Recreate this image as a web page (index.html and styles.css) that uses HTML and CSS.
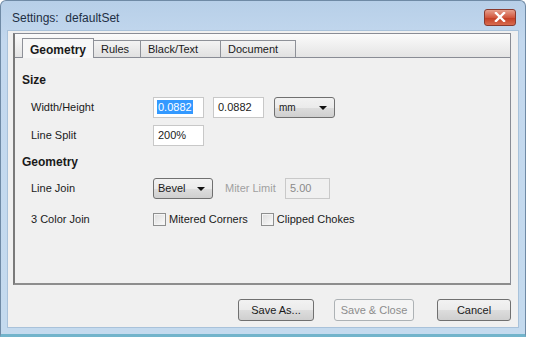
FILE: index.html
```html
<!DOCTYPE html>
<html lang="en">
<head>
    <meta charset="UTF-8">
    <title>Settings: defaultSet</title>
    <link rel="stylesheet" href="styles.css">
</head>
<body>
    <div class="window">
        <div class="titlebar">
            <span class="title">Settings:&nbsp; defaultSet</span>
            <div class="close">
                <svg width="12" height="10" viewBox="0 0 12 10">
                    <path d="M2 1 L10 9 M10 1 L2 9" stroke="#fff" stroke-width="2.4" stroke-linecap="square"/>
                </svg>
            </div>
        </div>
        <div class="client">
            <div class="panel">
                <div class="tabs">
                    <div class="tab active">Geometry</div>
                    <div class="tab tab-rules">Rules</div>
                    <div class="tab tab-black">Black/Text</div>
                    <div class="tab tab-doc">Document</div>
                </div>
                <div class="content">
                    <div class="section">Size</div>
                    <div class="row">
                        <span class="label">Width/Height</span>
                        <span class="field w51"><span class="sel">0.0882</span></span>
                        <span class="field w51 ml9">0.0882</span>
                        <span class="dropdown w61 ml10">mm<i class="arrow"></i></span>
                    </div>
                    <div class="row r2">
                        <span class="label">Line Split</span>
                        <span class="field w51">200%</span>
                    </div>
                    <div class="section s2">Geometry</div>
                    <div class="row r3">
                        <span class="label">Line Join</span>
                        <span class="dropdown w60">Bevel<i class="arrow"></i></span>
                        <span class="muted">Miter Limit</span>
                        <span class="field w45 disabled">5.00</span>
                    </div>
                    <div class="row r4">
                        <span class="label">3 Color Join</span>
                        <span class="check"></span>
                        <span class="check-text">Mitered Corners</span>
                        <span class="check ml13"></span>
                        <span class="check-text">Clipped Chokes</span>
                    </div>
                </div>
            </div>
            <div class="buttons">
                <button class="btn b-save">Save As...</button>
                <button class="btn b-close" disabled>Save &amp; Close</button>
                <button class="btn b-cancel">Cancel</button>
            </div>
        </div>
    </div>
</body>
</html>
```

FILE: styles.css
```css
body {
    margin: 0;
    background: #fff;
    font-family: "Liberation Sans", Arial, sans-serif;
    font-size: 11px;
    color: #1a1a1a;
}

.window {
    width: 526px;
    height: 337px;
    box-sizing: border-box;
    border: 1px solid #6f8aa5;
    border-bottom: 3px solid #72b4cb;
    border-radius: 6px 6px 0 0;
    background: linear-gradient(#b7cfe8, #c3d8ee 40px, #c4daee);
    padding: 0 6px 6px 6px;
    display: flex;
    flex-direction: column;
}

.titlebar {
    height: 29px;
    display: flex;
    align-items: center;
    justify-content: space-between;
    padding-left: 5px;
    padding-right: 3px;
}

.title {
    font-size: 12px;
    color: #1e2f44;
    margin-top: 4px;
}

.close {
    width: 30px;
    height: 15px;
    margin-top: 3px;
    border: 1px solid #8a3a2e;
    border-radius: 3px;
    background: linear-gradient(#e6a08e, #d2583f 50%, #c23c22 51%, #d86c4f);
    display: flex;
    align-items: center;
    justify-content: center;
}

.client {
    flex: 1;
    background: #f0f0f0;
    border: 1px solid #a9c2da;
    padding: 2px 7px 0 5px;
    display: flex;
    flex-direction: column;
}

.panel {
    height: 252px;
    box-sizing: border-box;
    border: 1px solid #898c95;
    border-left: 2px solid #7a7a7a;
    border-bottom: 2px solid #8d8d8d;
    display: flex;
    flex-direction: column;
    background: #f0f0f0;
}

.tabs {
    height: 23px;
    display: flex;
    align-items: flex-end;
    padding-left: 7px;
    background: linear-gradient(#fbfbfb, #e4e4e4);
    border-bottom: 1px solid #898c95;
}

.tab {
    height: 17px;
    box-sizing: border-box;
    border: 1px solid #8e9198;
    border-bottom: none;
    border-left: none;
    background: linear-gradient(#f3f3f3, #e1e1e1);
    padding: 2px 0 0 7px;
}

.tab.active {
    width: 72px;
    height: 20px;
    margin-bottom: -1px;
    border-left: 1px solid #8e9198;
    background: #f7f7f7;
    font-weight: bold;
    font-size: 12px;
    padding: 4px 0 0 7px;
}

.tab-rules { width: 47px; }
.tab-black { width: 80px; }
.tab-doc { width: 75px; }

.content {
    padding: 14px 0 0 7px;
}

.section {
    height: 16px;
    line-height: 16px;
    font-weight: bold;
    font-size: 12px;
}

.s2 { margin-top: 8px; }

.row {
    display: flex;
    align-items: center;
    height: 22px;
    margin-top: 8px;
}

.r2 { margin-top: 6px; }
.r3 { margin-top: 7px; }
.r4 { margin-top: 9px; }

.label {
    width: 122px;
    padding-left: 9px;
    flex-shrink: 0;
}

.field {
    height: 21px;
    box-sizing: border-box;
    border: 1px solid #c8c8c8;
    background: #fff;
    padding: 0 4px;
    display: flex;
    align-items: center;
}

.field.disabled {
    background: #f0f0f0;
    border-color: #c9c9c9;
    color: #8a8a8a;
}

.sel {
    background: #3399ff;
    color: #fff;
    margin-left: -1px;
    padding: 1px 1px;
}

.w45 { width: 45px; }
.w51 { width: 51px; }
.w60 { width: 60px; }
.w61 { width: 61px; }
.ml9 { margin-left: 9px; }
.ml10 { margin-left: 10px; }
.ml13 { margin-left: 13px; }

.dropdown {
    position: relative;
    height: 21px;
    box-sizing: border-box;
    border: 1px solid #707070;
    border-radius: 3px;
    background: linear-gradient(#f2f2f2, #ebebeb 50%, #dddddd 51%, #cfcfcf);
    padding: 0 4px;
    display: flex;
    align-items: center;
    font-size: 10px;
}

.r3 .dropdown { font-size: 11px; }

.arrow {
    position: absolute;
    right: 7px;
    top: 8px;
    border-left: 4px solid transparent;
    border-right: 4px solid transparent;
    border-top: 4px solid #111;
}

.muted {
    color: #a0a0a0;
    margin-left: 12px;
    width: 60px;
}

.check {
    width: 13px;
    height: 13px;
    box-sizing: border-box;
    border: 1px solid #8e8f8f;
    background: linear-gradient(135deg, #dcdcdc, #fbfbfb);
    box-shadow: inset 0 0 0 1px #f4f4f4;
}

.check-text {
    margin-left: 3px;
}

.buttons {
    display: flex;
    padding-top: 14px;
}

.btn {
    height: 22px;
    box-sizing: border-box;
    border: 1px solid #707070;
    border-radius: 3px;
    background: linear-gradient(#f2f2f2, #ebebeb 50%, #dddddd 51%, #cfcfcf);
    font-family: "Liberation Sans", Arial, sans-serif;
    font-size: 11px;
    color: #1a1a1a;
    padding: 0;
}

.b-save { width: 76px; margin-left: 225px; }
.b-close {
    width: 80px;
    margin-left: 20px;
    background: #f4f4f4;
    border-color: #adb2b5;
    color: #8d8d8d;
}
.b-cancel { width: 74px; margin-left: 23px; }
```
